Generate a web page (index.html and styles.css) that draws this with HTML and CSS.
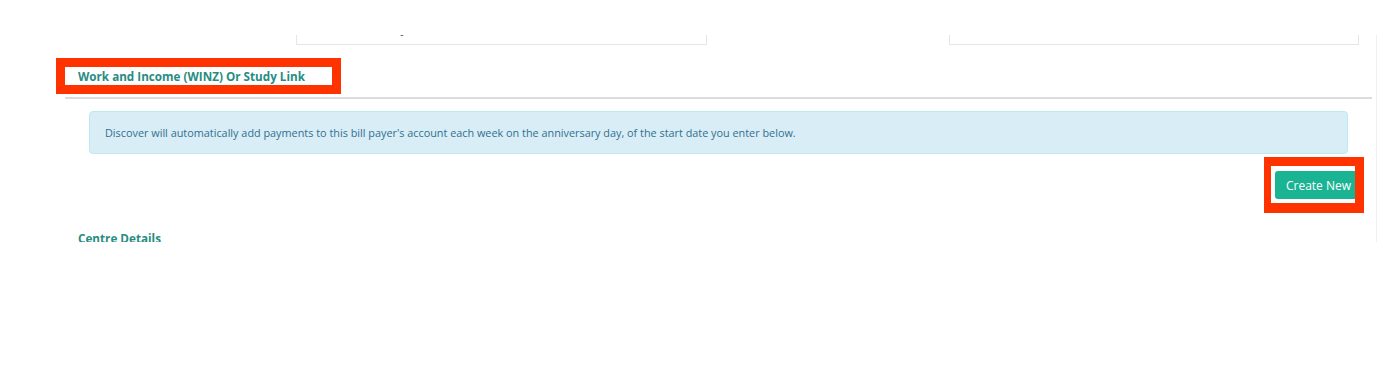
FILE: index.html
```html
<!DOCTYPE html>
<html lang="en">

<head>
    <meta charset="UTF-8">
    <title>Bill Payer - Work and Income</title>
    <link rel="stylesheet" href="styles.css">
</head>

<body>
    <div class="viewport">
        <div class="form-row">
            <div class="field field-left">Not Mandatory</div>
            <div class="field field-right"></div>
        </div>

        <div class="panel">
            <div class="panel-heading">Work and Income (WINZ) Or Study Link</div>
            <div class="panel-body">
                <div class="alert">Discover will automatically add payments to this bill payer's account each week on the anniversary day, of the start date you enter below.</div>
                <div class="actions">
                    <button type="button" class="btn primary">Create New</button>
                </div>
            </div>
            <div class="panel-heading next">Centre Details</div>
        </div>
    </div>

    <div class="mark mark-heading"></div>
    <div class="mark mark-button"></div>
</body>

</html>
```

FILE: styles.css
```css
body {
    margin: 0;
    background-color: #ffffff;
    font-family: "Open Sans", Arial, sans-serif;
    color: #676a6c;
}

.viewport {
    margin-top: 35px;
    width: 1376px;
    height: 207px;
    overflow: hidden;
    border-right: 1px solid #eef0f2;
}

.form-row {
    display: flex;
    margin-top: -24px;
}

.field {
    height: 34px;
    box-sizing: border-box;
    border: 1px solid #e5e6e7;
    font-size: 13px;
    line-height: 32px;
    color: #555555;
}

.field-left {
    margin-left: 296px;
    width: 411px;
    padding-left: 18px;
}

.field-right {
    margin-left: 242px;
    width: 410px;
}

.panel {
    margin-left: 65px;
    width: 1307px;
}

.panel-heading {
    padding: 24px 13px 14px;
    line-height: 14px;
    font-size: 11.7px;
    font-weight: bold;
    color: #288c82;
    border-bottom: 2px solid #dcdcdc;
}

.panel-heading.next {
    padding: 29px 13px 0;
    line-height: 20px;
    border-bottom: none;
}

.panel-body {
    padding: 12px 24px 0;
}

.alert {
    padding: 14px 15px;
    line-height: 13px;
    font-size: 10.85px;
    color: #31708f;
    background-color: #d9edf7;
    border: 1px solid #bce8f1;
    border-radius: 4px;
}

.actions {
    display: flex;
    justify-content: flex-end;
    margin-top: 17px;
    margin-right: -14px;
}

.btn {
    width: 87px;
    height: 28px;
    padding: 0;
    font-family: "Open Sans", Arial, sans-serif;
    font-size: 12px;
    color: white;
    border: none;
    border-radius: 3px;
    cursor: pointer;
}

.primary {
    background-color: #1ab394;
}

.mark {
    position: absolute;
    box-sizing: border-box;
    border: 9px solid #ff3300;
}

.mark-heading {
    left: 56px;
    top: 58px;
    width: 285px;
    height: 36px;
}

.mark-button {
    left: 1264px;
    top: 157px;
    width: 100px;
    height: 56px;
    border-width: 9px 9px 10px 7px;
}
```
